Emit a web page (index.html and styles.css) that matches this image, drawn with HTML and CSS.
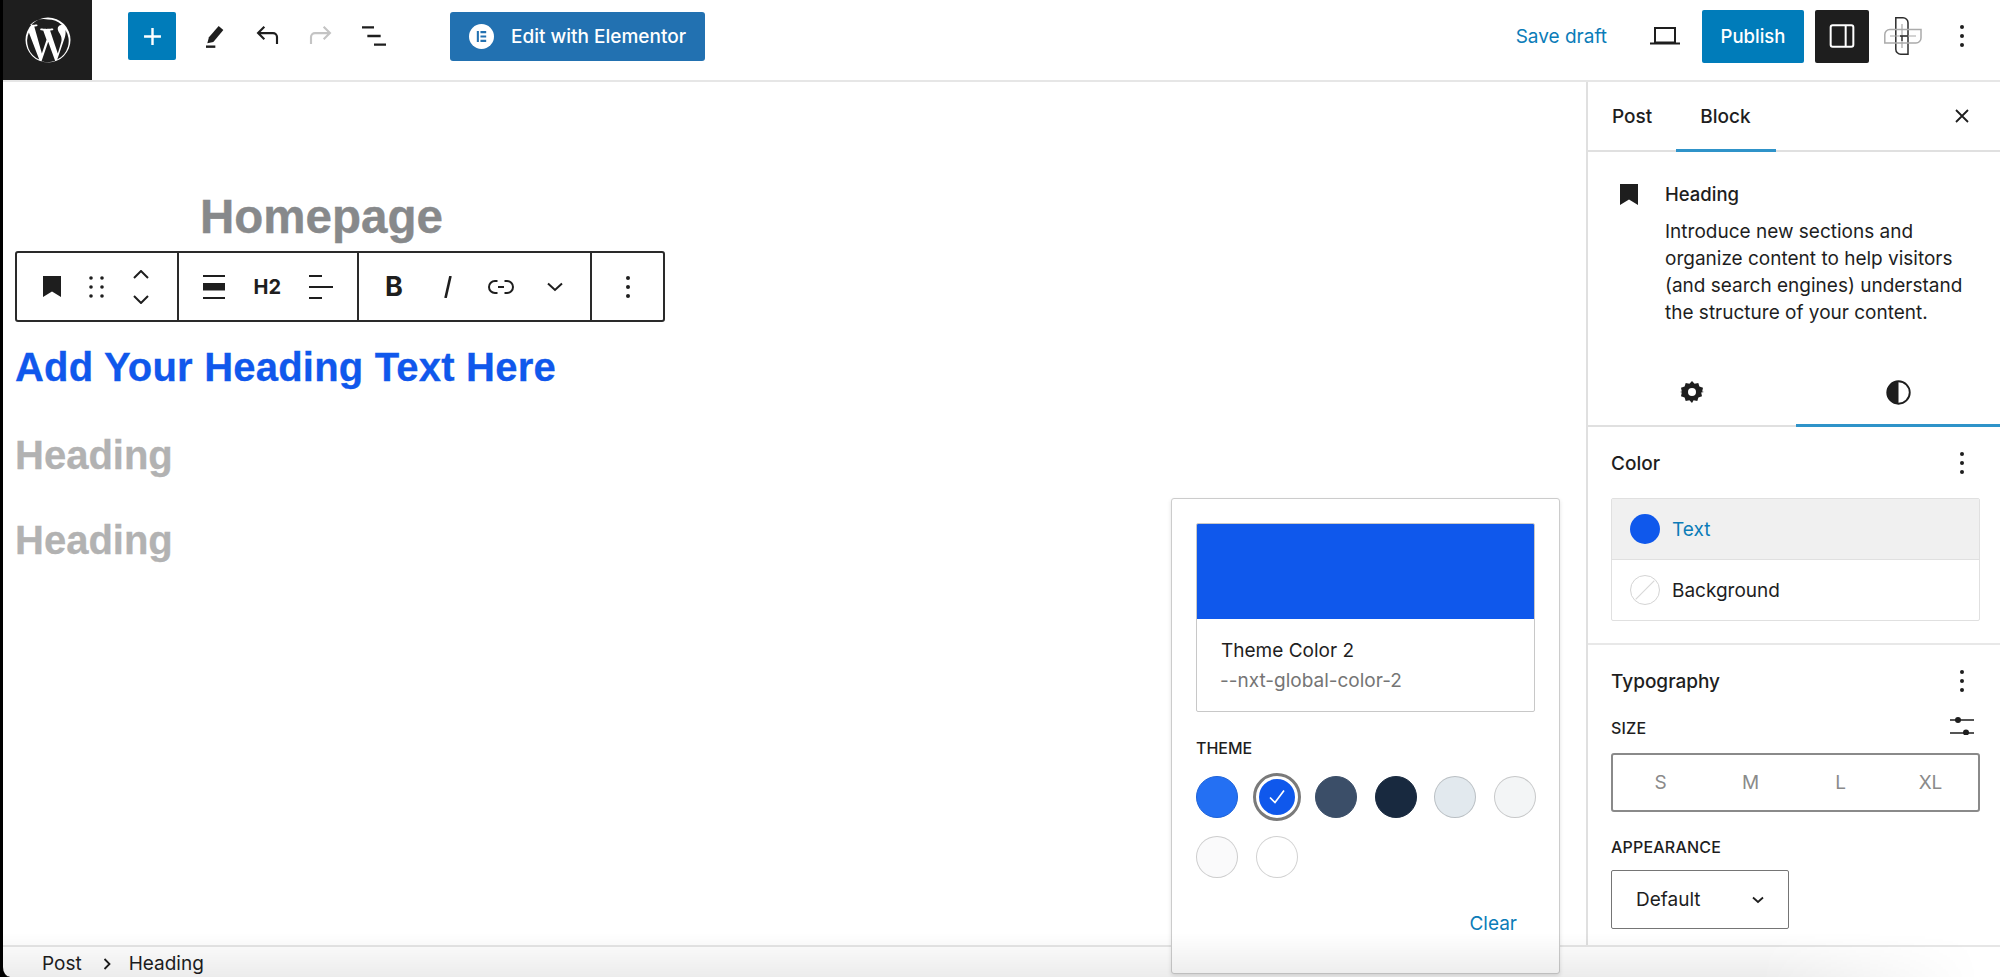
FILE: index.html
```html
<!DOCTYPE html>
<html lang="en">
<head>
<meta charset="utf-8">
<title>Edit Page</title>
<link rel="stylesheet" href="styles.css">
</head>
<body>
<div class="app">
  <header class="topbar">
    <div class="wp-logo">
      <svg viewBox="0 0 24 24" width="54" height="54" fill="#fff"><path d="M12 2a10 10 0 1 0 0 20 10 10 0 0 0 0-20zm0 .9a9.1 9.1 0 0 1 6.15 2.39c-.08 0-.16-.01-.24-.01-.93 0-1.59.81-1.59 1.68 0 .78.45 1.44.93 2.22.36.63.78 1.44.78 2.61 0 .81-.31 1.75-.72 3.06l-.95 3.16-3.43-10.2c.57-.03 1.08-.09 1.08-.09.51-.06.45-.81-.06-.78 0 0-1.53.12-2.52.12-.93 0-2.49-.12-2.49-.12-.51-.03-.57.75-.06.78 0 0 .48.06 1 .09l1.47 4.04-2.07 6.2L5.9 6.03c.57-.03 1.08-.09 1.08-.09.51-.06.45-.81-.06-.78 0 0-1.52.12-2.5.12h-.4A9.09 9.09 0 0 1 12 2.9zM3.5 8.66l4.6 12.02A9.1 9.1 0 0 1 3.5 8.66zm5.63 12.77 2.96-8.6 3.03 8.3.07.14a9.1 9.1 0 0 1-6.06.16zm6.97-.78 2.98-8.62c.56-1.39.74-2.5.74-3.49 0-.36-.02-.69-.07-1a9.1 9.1 0 0 1-3.65 13.11z"/></svg>
    </div>
    <div class="tools-left">
      <button class="plus-btn" type="button"><svg viewBox="0 0 24 24" width="29" height="29"><path d="M11 5h2v6h6v2h-6v6h-2v-6H5v-2h6z" fill="#fff"/></svg></button>
      <span class="tool"><svg viewBox="0 0 24 24" width="32" height="32"><path d="M15.5 4.5 19 7.5 11.5 16.5 7 17.5 8.2 13z" fill="#1e1e1e"/><path d="M6 20h7" stroke="#1e1e1e" stroke-width="1.8"/></svg></span>
      <span class="tool"><svg viewBox="0 0 24 24" width="32" height="32"><path d="M19.5 18v-5.2a3 3 0 0 0-3-3H6M10 5 5.3 9.8 10 14.5" fill="none" stroke="#1e1e1e" stroke-width="1.6"/></svg></span>
      <span class="tool"><svg viewBox="0 0 24 24" width="32" height="32"><path d="M4.5 18v-5.2a3 3 0 0 1 3-3H18M14 5l4.7 4.8L14 14.5" fill="none" stroke="#c4c4c4" stroke-width="1.6"/></svg></span>
      <span class="tool"><svg viewBox="0 0 24 24" width="32" height="32"><path d="M3 5.5h9M7 12h10M12 18.5h9" stroke="#1e1e1e" stroke-width="1.8"/></svg></span>
      <button class="elementor-btn" type="button">
        <svg viewBox="0 0 24 24" width="25" height="25"><circle cx="12" cy="12" r="12" fill="#fff"/><path d="M7.5 6.8h2v10.4h-2zM11 6.8h5.5v2H11zM11 11h5.5v2H11zM11 15.2h5.5v2H11z" fill="#2271b1"/></svg>
        <span>Edit with Elementor</span>
      </button>
    </div>
    <div class="tools-right">
      <span class="save-draft">Save draft</span>
      <span class="laptop"><svg viewBox="0 0 30 18" width="30" height="18"><path d="M5 1h20v14.5H5z" fill="none" stroke="#1e1e1e" stroke-width="2"/><path d="M0 16.5h30" stroke="#1e1e1e" stroke-width="2"/></svg></span>
      <button class="publish-btn" type="button">Publish</button>
      <button class="panel-btn" type="button"><svg viewBox="0 0 24 24" width="32" height="32"><rect x="3.5" y="4" width="17" height="16" rx="1.5" fill="none" stroke="#fff" stroke-width="1.5"/><rect x="14" y="4" width="1.5" height="16" fill="#fff"/></svg></button>
      <span class="plus-logo">
        <svg viewBox="0 0 38 38" width="38" height="38" fill="none"><path d="M11.8.8H19a5 5 0 0 1 5 5v31.4h-7a5 5 0 0 1-5.200-5z" stroke="#2c2c2c" stroke-width="1.5"/><path d="M5.800 12.500H37V21a5 5 0 0 1-5 5H.8v-8.500a5 5 0 0 1 5-5z" stroke="#ababab" stroke-width="1.5"/><path d="M6 19h26M18 7v24" stroke="#a8a8a8" stroke-width="1.2"/><path d="M16 19h8M18 19v5" stroke="#2c2c2c" stroke-width="1.3"/></svg>
      </span>
      <span class="kebab kebab-top"><i></i><i></i><i></i></span>
    </div>
  </header>

  <div class="middle">
    <main class="canvas">
      <h1 class="post-title">Homepage</h1>
      <div class="block-toolbar">
        <div class="tb-group tb-first">
          <span class="tb-slot"><svg viewBox="0 0 18 21" width="18" height="21"><path d="M0 0h18v21l-9-5.500L0 21z" fill="#1e1e1e"/></svg></span>
          <span class="tb-slot"><svg viewBox="0 0 15 22" width="15" height="22" fill="#1e1e1e"><circle cx="2" cy="2" r="1.8"/><circle cx="13" cy="2" r="1.8"/><circle cx="2" cy="11" r="1.8"/><circle cx="13" cy="11" r="1.8"/><circle cx="2" cy="20" r="1.8"/><circle cx="13" cy="20" r="1.8"/></svg></span>
          <span class="tb-slot"><svg viewBox="0 0 18 34" width="18" height="34" fill="none" stroke="#1e1e1e" stroke-width="2"><path d="M2 8l7-7 7 7M2 26l7 7 7-7"/></svg></span>
        </div>
        <div class="tb-group tb-second">
          <span class="tb-slot"><svg viewBox="0 0 22 24" width="22" height="24"><path d="M0 1h22M0 23h22" stroke="#1e1e1e" stroke-width="2"/><path d="M0 8h22v7.500H0z" fill="#1e1e1e"/></svg></span>
          <span class="tb-slot tb-h2">H2</span>
          <span class="tb-slot"><svg viewBox="0 0 24 24" width="24" height="24"><path d="M0 1h13M0 12h24M0 23h13" stroke="#1e1e1e" stroke-width="2"/></svg></span>
        </div>
        <div class="tb-group tb-third">
          <span class="tb-slot tb-bold">B</span>
          <span class="tb-slot"><svg viewBox="0 0 8 22" width="8" height="22"><path d="M6.500 0 1.500 22" stroke="#1e1e1e" stroke-width="2.600"/></svg></span>
          <span class="tb-slot"><svg viewBox="0 0 26 14" width="26" height="14" fill="none" stroke="#1e1e1e" stroke-width="2"><path d="M9.500 1H7a6 6 0 0 0 0 12h2.500M16.500 1H19a6 6 0 0 1 0 12h-2.500M10 7h6"/></svg></span>
          <span class="tb-slot"><svg viewBox="0 0 16 10" width="16" height="10" fill="none" stroke="#1e1e1e" stroke-width="2"><path d="M1 1.500l7 6.500 7-6.500"/></svg></span>
        </div>
        <div class="tb-group tb-fourth">
          <span class="kebab"><i></i><i></i><i></i></span>
        </div>
      </div>
      <h2 class="heading-active">Add Your Heading Text Here</h2>
      <h2 class="heading-muted">Heading</h2>
      <h2 class="heading-muted">Heading</h2>
    </main>

    <aside class="sidebar">
      <div class="side-tabs">
        <span class="side-tab">Post</span>
        <span class="side-tab side-tab-on">Block</span>
        <span class="side-close"><svg viewBox="0 0 16 16" width="16" height="16"><path d="M2 2l12 12M14 2 2 14" stroke="#1e1e1e" stroke-width="1.8"/></svg></span>
      </div>
      <div class="block-card">
        <svg class="card-icon" viewBox="0 0 18 21" width="18" height="21"><path d="M0 0h18v21l-9-5.500L0 21z" fill="#1e1e1e"/></svg>
        <div class="card-body">
          <div class="card-title">Heading</div>
          <p class="card-desc">Introduce new sections and organize content to help visitors (and search engines) understand the structure of your content.</p>
        </div>
      </div>
      <div class="inspector-tabs">
        <span class="inspector-tab">
          <svg viewBox="0 0 24 24" width="24" height="24"><path fill="#1e1e1e" fill-rule="evenodd" d="m12 1 2.600 2.800 3.700-.8 1.100 3.600 3.600 1.100-.8 3.700L24 12l-2.800.6.800 3.700-3.600 1.100-1.100 3.600-3.700-.8L12 23l-2.600-2.800-3.700.8-1.100-3.600-3.600-1.100.8-3.700L0 12l1.800-.6-.8-3.700 3.600-1.100L5.700 3l3.700.8zm0 7a4 4 0 1 0 0 8 4 4 0 0 0 0-8z"/></svg>
        </span>
        <span class="inspector-tab inspector-tab-on">
          <svg viewBox="0 0 24 24" width="25" height="25"><circle cx="12" cy="12" r="10.8" fill="none" stroke="#1e1e1e" stroke-width="1.8"/><path d="M12 1.200a10.800 10.800 0 0 0 0 21.600z" fill="#1e1e1e"/></svg>
        </span>
      </div>
      <section class="panel panel-color">
        <div class="panel-head"><span>Color</span><span class="kebab"><i></i><i></i><i></i></span></div>
        <div class="color-list">
          <div class="color-row color-row-on"><span class="dot dot-blue"></span><span>Text</span></div>
          <div class="color-row">
            <span class="dot dot-none"><svg viewBox="0 0 30 30" width="28" height="28"><path d="M5 25 25 5" stroke="#d8d8d8" stroke-width="1.2"/></svg></span><span>Background</span>
          </div>
        </div>
      </section>
      <section class="panel panel-type">
        <div class="panel-head"><span>Typography</span><span class="kebab"><i></i><i></i><i></i></span></div>
        <div class="size-head">
          <span class="caps">Size</span>
          <svg class="size-icon" viewBox="0 0 24 18" width="24" height="18"><path d="M0 3h24M0 16h24" stroke="#1e1e1e" stroke-width="1.5"/><circle cx="8" cy="3" r="3" fill="#1e1e1e"/><circle cx="16" cy="15.500" r="3" fill="#1e1e1e"/></svg>
        </div>
        <div class="size-seg"><span>S</span><span>M</span><span>L</span><span>XL</span></div>
        <div class="caps caps-appearance">Appearance</div>
        <div class="select-box"><span>Default</span><svg viewBox="0 0 12 8" width="12" height="8" fill="none" stroke="#1e1e1e" stroke-width="1.8"><path d="M1 1.500l5 4.500 5-4.500"/></svg></div>
      </section>
    </aside>
  </div>

  <footer class="statusbar">
    <span>Post</span>
    <svg viewBox="0 0 8 12" width="8" height="12" fill="none" stroke="#1e1e1e" stroke-width="1.8"><path d="M1.500 1 6.500 6l-5 5"/></svg>
    <span class="status-last">Heading</span>
  </footer>

  <div class="popover">
    <div class="swatch-card">
      <div class="swatch-fill"></div>
      <div class="swatch-info">
        <div class="swatch-name">Theme Color 2</div>
        <div class="swatch-var">--nxt-global-color-2</div>
      </div>
    </div>
    <div class="theme-label">Theme</div>
    <div class="theme-grid">
      <span class="circle c1"></span>
      <span class="circle c2"><svg viewBox="0 0 24 24" width="24" height="24" fill="none" stroke="#fff" stroke-width="1.7"><path d="M5 12.500l5 5L19 5.500"/></svg></span>
      <span class="circle c3"></span>
      <span class="circle c4"></span>
      <span class="circle c5"></span>
      <span class="circle c6"></span>
      <span class="circle c7"></span>
      <span class="circle c8"></span>
    </div>
    <div class="clear-row"><span>Clear</span></div>
  </div>

  <div class="bottom-fade"></div>
</div>
</body>
</html>
```

FILE: styles.css
```css
* { box-sizing: border-box; }
html, body { margin: 0; height: 100%; overflow: hidden; background: #000; }
body { font-family: Inter, "Noto Sans", sans-serif; color: #1e1e1e; }
button { font-family: inherit; border: 0; cursor: pointer; }
h1, h2, p { margin: 0; }

.app {
  position: relative;
  width: 2000px;
  height: 977px;
  display: flex;
  flex-direction: column;
  background: #fff;
  border-left: 3px solid #000;
  border-bottom-left-radius: 10px;
  overflow: hidden;
}

.topbar {
  flex: 0 0 82px;
  display: flex;
  align-items: flex-start;
  border-bottom: 2px solid #e6e6e6;
}
.wp-logo {
  flex: 0 0 89px;
  height: 80px;
  background: #1e1e1e;
  display: flex;
  align-items: center;
  justify-content: center;
}
.tools-left {
  display: flex;
  align-items: center;
  height: 72px;
  padding-left: 36px;
}
.plus-btn {
  width: 48px;
  height: 48px;
  padding: 0;
  border-radius: 2px;
  background: #007cba;
  display: flex;
  align-items: center;
  justify-content: center;
}
.tool {
  width: 53.5px;
  display: flex;
  justify-content: center;
}
.tool:first-of-type { margin-left: 11px; }
.elementor-btn {
  width: 255px;
  height: 49px;
  margin-left: 49px;
  padding: 0 0 0 19px;
  display: flex;
  align-items: center;
  gap: 17px;
  background: #2271b1;
  color: #fff;
  font-size: 19px;
  font-weight: 500;
  border-radius: 3px;
}
.tools-right {
  margin-left: auto;
  display: flex;
  align-items: center;
  height: 72px;
  padding-right: 36px;
}
.save-draft { font-size: 19px; color: #0b7cb8; }
.laptop { display: flex; margin-left: 43px; }
.publish-btn {
  width: 102px;
  height: 53px;
  margin-left: 22px;
  background: #007cba;
  color: #fff;
  font-size: 18.5px;
  font-weight: 500;
  border-radius: 2px;
}
.panel-btn {
  width: 54px;
  height: 53px;
  margin-left: 11px;
  padding: 0;
  background: #1e1e1e;
  border-radius: 2px;
  display: flex;
  align-items: center;
  justify-content: center;
}
.plus-logo { display: flex; margin-left: 15px; }
.kebab { display: inline-flex; flex-direction: column; gap: 5px; align-items: center; }
.kebab i { width: 4px; height: 4px; border-radius: 50%; background: #1e1e1e; }
.kebab-top { margin-left: 38px; }

.middle { flex: 0 0 863px; display: flex; min-height: 0; }
.canvas { flex: 1; min-width: 0; padding: 105px 0 0 12px; }
.post-title {
  margin: 0 0 4px 185px;
  font: 700 47.5px/60px "Liberation Sans", Arial, sans-serif;
  -webkit-text-stroke: .4px #87898b;
  color: #87898b;
}
.block-toolbar {
  width: 650px;
  height: 71px;
  display: flex;
  border: 2px solid #2a2a2a;
  border-radius: 3px;
  background: #fff;
}
.tb-group {
  display: flex;
  align-items: center;
  border-right: 2px solid #2a2a2a;
}
.tb-slot { display: flex; align-items: center; justify-content: center; }
.tb-first { width: 162px; padding-left: 13px; }
.tb-first .tb-slot { width: 44.5px; }
.tb-second { width: 180px; padding-left: 8px; }
.tb-second .tb-slot { width: 53.5px; }
.tb-third { width: 233px; padding-left: 8px; }
.tb-third .tb-slot { width: 53.7px; }
.tb-fourth { flex: 1; justify-content: center; border-right: 0; }
.tb-h2 { font-size: 20px; font-weight: 700; }
.tb-bold { font-size: 27px; font-weight: 700; }
.heading-active {
  margin-top: 21px;
  font: 700 40px/48px "Liberation Sans", Arial, sans-serif;
  letter-spacing: .2px;
  -webkit-text-stroke: .3px #1058ec;
  color: #1058ec;
}
.heading-muted {
  margin-top: 37px;
  font: 700 40px/48px "Liberation Sans", Arial, sans-serif;
  -webkit-text-stroke: .3px #b2b2b2;
  color: #b2b2b2;
}
.heading-active + .heading-muted { margin-top: 39.5px; }

.sidebar {
  flex: 0 0 414px;
  border-left: 2px solid #e0e0e0;
  display: flex;
  flex-direction: column;
  overflow: hidden;
}
.side-tabs {
  flex: 0 0 70px;
  display: flex;
  padding-left: 24px;
  border-bottom: 2px solid #e0e0e0;
}
.side-tab {
  display: flex;
  align-items: center;
  position: relative;
  font-size: 19px;
  font-weight: 500;
  margin-right: 48px;
}
.side-tab-on::after {
  content: "";
  position: absolute;
  left: -24px;
  right: -25px;
  bottom: -2px;
  height: 3px;
  background: #2f93c9;
}
.side-close { margin-left: auto; margin-right: 30px; display: flex; align-items: center; }

.block-card {
  flex: 0 0 221px;
  display: flex;
  padding: 30px 24px 0 32px;
  gap: 27px;
}
.card-icon { margin-top: 2px; flex: none; }
.card-title { font-size: 18.5px; font-weight: 500; line-height: 24px; }
.card-desc { font-size: 19px; line-height: 27px; margin-top: 12px; max-width: 300px; }

.inspector-tabs {
  flex: 0 0 54px;
  display: flex;
  border-bottom: 2px solid #e0e0e0;
}
.inspector-tab { flex: 0 0 208px; display: flex; justify-content: center; padding-top: 7px; position: relative; }
.inspector-tab-on { flex: 1; }
.inspector-tab-on::after {
  content: "";
  position: absolute;
  left: 0;
  right: 0;
  bottom: -2px;
  height: 3px;
  background: #2f93c9;
}

.panel { padding: 0 20px 0 23px; }
.panel-color { flex: 0 0 218px; border-bottom: 2px solid #e8e8e8; padding-top: 23px; }
.panel-head {
  display: flex;
  justify-content: space-between;
  align-items: center;
  height: 26px;
  font-size: 19px;
  font-weight: 500;
}
.panel-head .kebab { margin-right: 16px; }
.color-list {
  margin-top: 22px;
  height: 123px;
  border: 1px solid #e0e0e0;
  border-radius: 2px;
  display: flex;
  flex-direction: column;
}
.color-row {
  flex: 1;
  display: flex;
  align-items: center;
  gap: 12px;
  padding-left: 18px;
  font-size: 19px;
}
.color-row-on { background: #f0f0f0; color: #0b7cb8; border-bottom: 1px solid #e0e0e0; }
.dot { width: 30px; height: 30px; border-radius: 50%; display: flex; flex: none; }
.dot-blue { background: #0f58ec; }
.dot-none { border: 1px solid #d4d4d4; }
.panel-type { padding-top: 23px; }
.caps { text-transform: uppercase; font-size: 16px; font-weight: 500; letter-spacing: .2px; }
.size-head {
  display: flex;
  justify-content: space-between;
  align-items: center;
  margin-top: 21px;
  padding-right: 6px;
  height: 26px;
}
.size-icon { margin-bottom: 4px; }
.size-seg {
  margin-top: 12px;
  height: 59px;
  border: 2px solid #8a8a8a;
  border-radius: 3px;
  display: grid;
  grid-template-columns: repeat(4, 90px);
  justify-content: center;
  align-items: center;
  text-align: center;
  font-size: 19px;
  color: #8a8a8a;
}
.caps-appearance { margin-top: 25px; line-height: 20px; }
.select-box {
  margin-top: 13px;
  width: 178px;
  height: 59px;
  border: 1px solid #757575;
  border-radius: 2px;
  display: flex;
  align-items: center;
  justify-content: space-between;
  padding: 0 24px;
  font-size: 19px;
}

.statusbar {
  flex: 0 0 32px;
  display: flex;
  align-items: center;
  gap: 21px;
  padding: 3px 0 0 39px;
  border-top: 2px solid #e6e6e6;
  font-size: 19px;
}
.status-last { margin-left: -3px; }

.popover {
  position: absolute;
  left: 1168px;
  top: 498px;
  width: 389px;
  height: 476px;
  padding: 24px 24px 0;
  background: #fff;
  border: 1px solid #ccc;
  border-radius: 3px;
  box-shadow: 0 2px 4px rgba(0,0,0,.12);
}
.swatch-card {
  height: 189px;
  border: 1px solid #c8c8c8;
  border-radius: 2px;
  overflow: hidden;
}
.swatch-fill { height: 95px; background: #0f58ec; }
.swatch-info { padding: 20px 0 0 24px; }
.swatch-name { font-size: 19px; line-height: 24px; }
.swatch-var { font-size: 19px; line-height: 24px; margin-top: 6px; color: #757575; margin-left: -1px; }
.theme-label {
  margin-top: 26px;
  text-transform: uppercase;
  font-size: 16px;
  font-weight: 500;
  line-height: 20px;
}
.theme-grid {
  margin-top: 18px;
  display: grid;
  grid-template-columns: repeat(6, 42px);
  gap: 18px 17.5px;
}
.circle {
  width: 42px;
  height: 42px;
  border-radius: 50%;
  display: flex;
  align-items: center;
  justify-content: center;
  border: 1px solid rgba(0,0,0,.18);
}
.c1 { background: #2470f3; border-color: #1d62d8; }
.c2 { background: #0f58ec; border: 3px solid #fff; outline: 3px solid #7a7a7a; }
.c3 { background: #3b4e68; border-color: #3b4e68; }
.c4 { background: #18293f; border-color: #18293f; }
.c5 { background: #e2e9ee; }
.c6 { background: #f3f5f6; }
.c7 { background: #fafafb; }
.c8 { background: #fff; }
.clear-row {
  margin-top: 34px;
  padding-right: 18px;
  text-align: right;
  font-size: 19px;
  color: #0b7cb8;
}

.bottom-fade {
  position: absolute;
  left: 0;
  right: 0;
  bottom: 0;
  height: 44px;
  pointer-events: none;
  background: linear-gradient(rgba(0,0,0,0), rgba(0,0,0,.075));
  -webkit-mask-image: linear-gradient(to right, #000 88%, transparent 99%);
  mask-image: linear-gradient(to right, #000 88%, transparent 99%);
}
```
